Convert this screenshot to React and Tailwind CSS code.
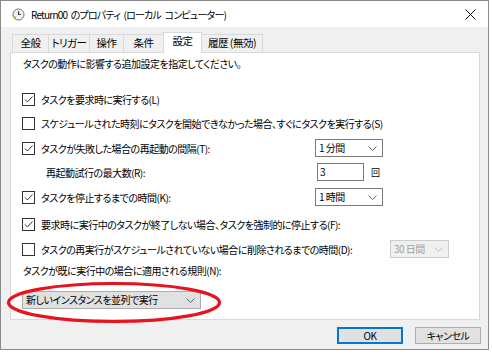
const jp = "font-['Noto_Sans_CJK_JP','Noto_Sans',sans-serif] [font-feature-settings:'palt']";

function Check({ on }) {
  return (
    <span className="flex h-[13px] w-[13px] shrink-0 items-center justify-center border border-[#333] bg-white">
      {on && (
        <svg width="11" height="11" viewBox="0 0 11 11">
          <path d="M2 5.5 L4.5 8 L9.5 2.5" fill="none" stroke="#333" strokeWidth="1" />
        </svg>
      )}
    </span>
  );
}

function Chevron({ color = "#666" }) {
  return (
    <svg width="9" height="5" viewBox="0 0 9 5">
      <path d="M0.5 0.5 L4.5 4.5 L8.5 0.5" fill="none" stroke={color} strokeWidth="1" />
    </svg>
  );
}

function Combo({ label, w, disabled, gray }) {
  return (
    <div
      className={`flex h-[18px] shrink-0 items-center justify-between border pl-[3px] pr-[5px] ${w} ${
        disabled
          ? "border-[#cccccc] bg-[#f0f0f0] text-[#a0a0a0]"
          : gray
          ? "border-[#adadad] bg-[#e1e1e1]"
          : "border-[#7a7a7a] bg-white"
      }`}
    >
      <span className="whitespace-nowrap leading-none">{label}</span>
      <Chevron color={disabled ? "#bbb" : "#666"} />
    </div>
  );
}

function Row({ on, label, h, children, lw = "w-[274px]" }) {
  return (
    <div className={`flex items-center ${h}`}>
      <Check on={on} />
      <span className={`ml-[6px] shrink-0 whitespace-nowrap ${lw}`}>{label}</span>
      {children}
    </div>
  );
}

const tabs = [
  ["全般", "w-[37px]"],
  ["トリガー", "w-[42px]"],
  ["操作", "w-[35px]"],
  ["条件", "w-[41px]"],
  ["設定", "w-[39px]", true],
  ["履歴 (無効)", "w-[62px]"],
];

export default function App() {
  return (
    <div className={`relative h-[356px] w-[492px] overflow-hidden bg-white text-[10px] tracking-[-0.5px] text-black ${jp}`}>
      <div className="flex h-[350px] w-[489px] flex-col border border-[#8a8a8a] bg-[#f0f0f0]">
        {/* title bar */}
        <div className="flex h-[26px] items-center bg-white pl-[11px] pr-[12px]">
          <svg width="13" height="13" viewBox="0 0 13 13">
            <circle cx="6.5" cy="6.5" r="5.5" fill="#f3f3f3" stroke="#6b6b6b" strokeWidth="1" />
            <path d="M6.5 3 V6.5 H9" fill="none" stroke="#444" strokeWidth="1.2" />
            <path d="M2 10.5 L4 8.5" stroke="#d9a400" strokeWidth="1.5" />
          </svg>
          <span className="ml-[6px] whitespace-nowrap text-[10px] tracking-[-0.8px] [word-spacing:2px]">Return00 のプロパティ (ローカル コンピューター)</span>
          <svg className="ml-auto" width="11" height="11" viewBox="0 0 11 11">
            <path d="M0.5 0.5 L10.5 10.5 M10.5 0.5 L0.5 10.5" stroke="#111" strokeWidth="1" />
          </svg>
        </div>

        {/* tabs */}
        <div className="flex h-[25px] items-end pl-[11px] text-[10.5px]">
          {tabs.map(([t, w, sel]) => (
            <div
              key={t}
              className={`relative -mr-px flex items-center justify-center border border-b-0 ${w} ${
                sel
                  ? "z-10 h-[20px] border-[#d9d9d9] bg-white pb-[2px]"
                  : "h-[18px] border-[#d9d9d9] bg-[#f0f0f0]"
              }`}
            >
              <span className="whitespace-nowrap leading-none">{t}</span>
              {sel && <span className="absolute -bottom-px left-0 right-0 h-px bg-white" />}
            </div>
          ))}
        </div>

        {/* panel */}
        <div className="ml-[9px] flex h-[268px] w-[470px] flex-col border border-[#d9d9d9] bg-white pl-[11px]">
          <div className="flex h-[20px] items-center pl-px">タスクの動作に影響する追加設定を指定してください。</div>
          <div className="h-[14px]" />
          <Row on label="タスクを要求時に実行する(L)" h="h-[24px]" />
          <Row label="スケジュールされた時刻にタスクを開始できなかった場合、すぐにタスクを実行する(S)" h="h-[25px]" />
          <Row on label="タスクが失敗した場合の再起動の間隔(T):" h="h-[24px]">
            <Combo label="1 分間" w="w-[68px]" />
          </Row>
          <div className="flex h-[24px] items-center">
            <span className="w-[295px] pl-[24px]">再起動試行の最大数(R):</span>
            <div className="flex h-[18px] w-[47px] items-center border border-[#7a7a7a] bg-white pl-[2px] leading-none">3</div>
            <span className="ml-[7px] text-[9px] leading-none">回</span>
          </div>
          <Row on label="タスクを停止するまでの時間(K):" h="h-[26px]">
            <Combo label="1 時間" w="w-[68px]" />
          </Row>
          <Row on label="要求時に実行中のタスクが終了しない場合、タスクを強制的に停止する(F):" h="h-[28px]" />
          <Row label="タスクの再実行がスケジュールされていない場合に削除されるまでの時間(D):" h="h-[22px]" lw="w-[349px]">
            <Combo label="30 日間" w="w-[59px]" disabled />
          </Row>
          <div className="flex h-[20px] items-center pl-px">タスクが既に実行中の場合に適用される規則(N):</div>
          <div className="mt-[11px]">
            <Combo label="新しいインスタンスを並列で実行" w="w-[179px]" gray />
          </div>
        </div>

        {/* footer */}
        <div className="flex flex-1 items-start justify-end gap-[12px] pr-[7px] pt-[7px]">
          <button className="flex h-[17px] w-[66px] items-center justify-center border-2 border-[#0078d7] bg-[#e1e1e1] leading-none">
            OK
          </button>
          <button className="flex h-[17px] w-[66px] items-center justify-center border border-[#adadad] bg-[#e1e1e1] leading-none">
            キャンセル
          </button>
        </div>
      </div>

      {/* red annotation ellipse */}
      <svg className="pointer-events-none absolute left-[6px] top-[281px]" width="216" height="43" viewBox="0 0 216 43">
        <ellipse cx="108" cy="21.5" rx="105.5" ry="19" fill="none" stroke="#e8131c" strokeWidth="3.2" />
      </svg>
    </div>
  );
}
